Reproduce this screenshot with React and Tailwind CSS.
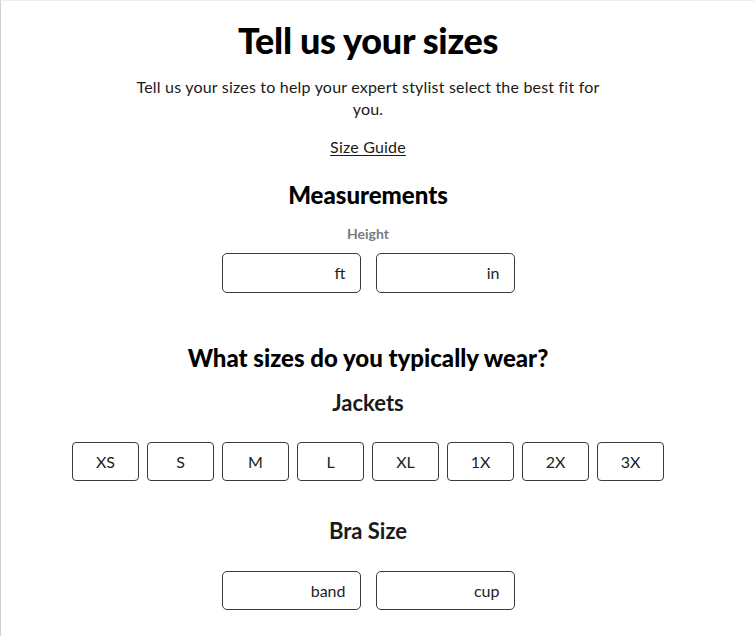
import React from "react";

const F = { fontFamily: "Lato, 'Noto Sans', sans-serif" };

function Field({ unit, h = "h-[40px]" }) {
  return (
    <div className={`w-[139px] ${h} border border-[#3a3a3a] rounded-[5px] flex items-center justify-end pr-[14px] text-[16px] text-[#222] bg-white`}>
      {unit}
    </div>
  );
}

export default function App() {
  const sizes = ["XS", "S", "M", "L", "XL", "1X", "2X", "3X"];
  return (
    <div className="w-[754px] h-[636px] bg-white border-l border-[#cfcfcf] border-t border-t-[#eeeeee] overflow-hidden" style={F}>
      <div className="w-[734px] flex flex-col items-center text-[#1a1a1a]">
        <h1 className="mt-[19px] text-[36px] leading-[40px] font-black tracking-[-0.3px] text-black">Tell us your sizes</h1>
        <p className="mt-[16px] w-[475px] text-center text-[16px] leading-[22px] tracking-[0.2px]">
          Tell us your sizes to help your expert stylist select the best fit for you.
        </p>
        <a className="mt-[17px] text-[16px] leading-[20px] tracking-[0.2px] underline underline-offset-2">Size Guide</a>
        <h2 className="mt-[24px] text-[24px] leading-[28px] font-black text-black">Measurements</h2>
        <div className="mt-[17px] text-[14px] leading-[16px] font-bold text-[#7a7a7a]">Height</div>
        <div className="mt-[11px] flex gap-[15px]">
          <Field unit="ft" />
          <Field unit="in" />
        </div>
        <h2 className="mt-[51px] text-[24px] leading-[28px] font-black text-black">What sizes do you typically wear?</h2>
        <h3 className="mt-[19px] text-[22px] leading-[24px] font-bold">Jackets</h3>
        <div className="mt-[27px] flex gap-[8px]">
          {sizes.map((s) => (
            <div key={s} className="w-[67px] h-[39px] border border-[#3a3a3a] rounded-[4px] flex items-center justify-center text-[16px] text-[#222] bg-white">
              {s}
            </div>
          ))}
        </div>
        <h3 className="mt-[38px] text-[22px] leading-[24px] font-bold">Bra Size</h3>
        <div className="mt-[28px] flex gap-[15px]">
          <Field unit="band" h="h-[39px]" />
          <Field unit="cup" h="h-[39px]" />
        </div>
      </div>
    </div>
  );
}
